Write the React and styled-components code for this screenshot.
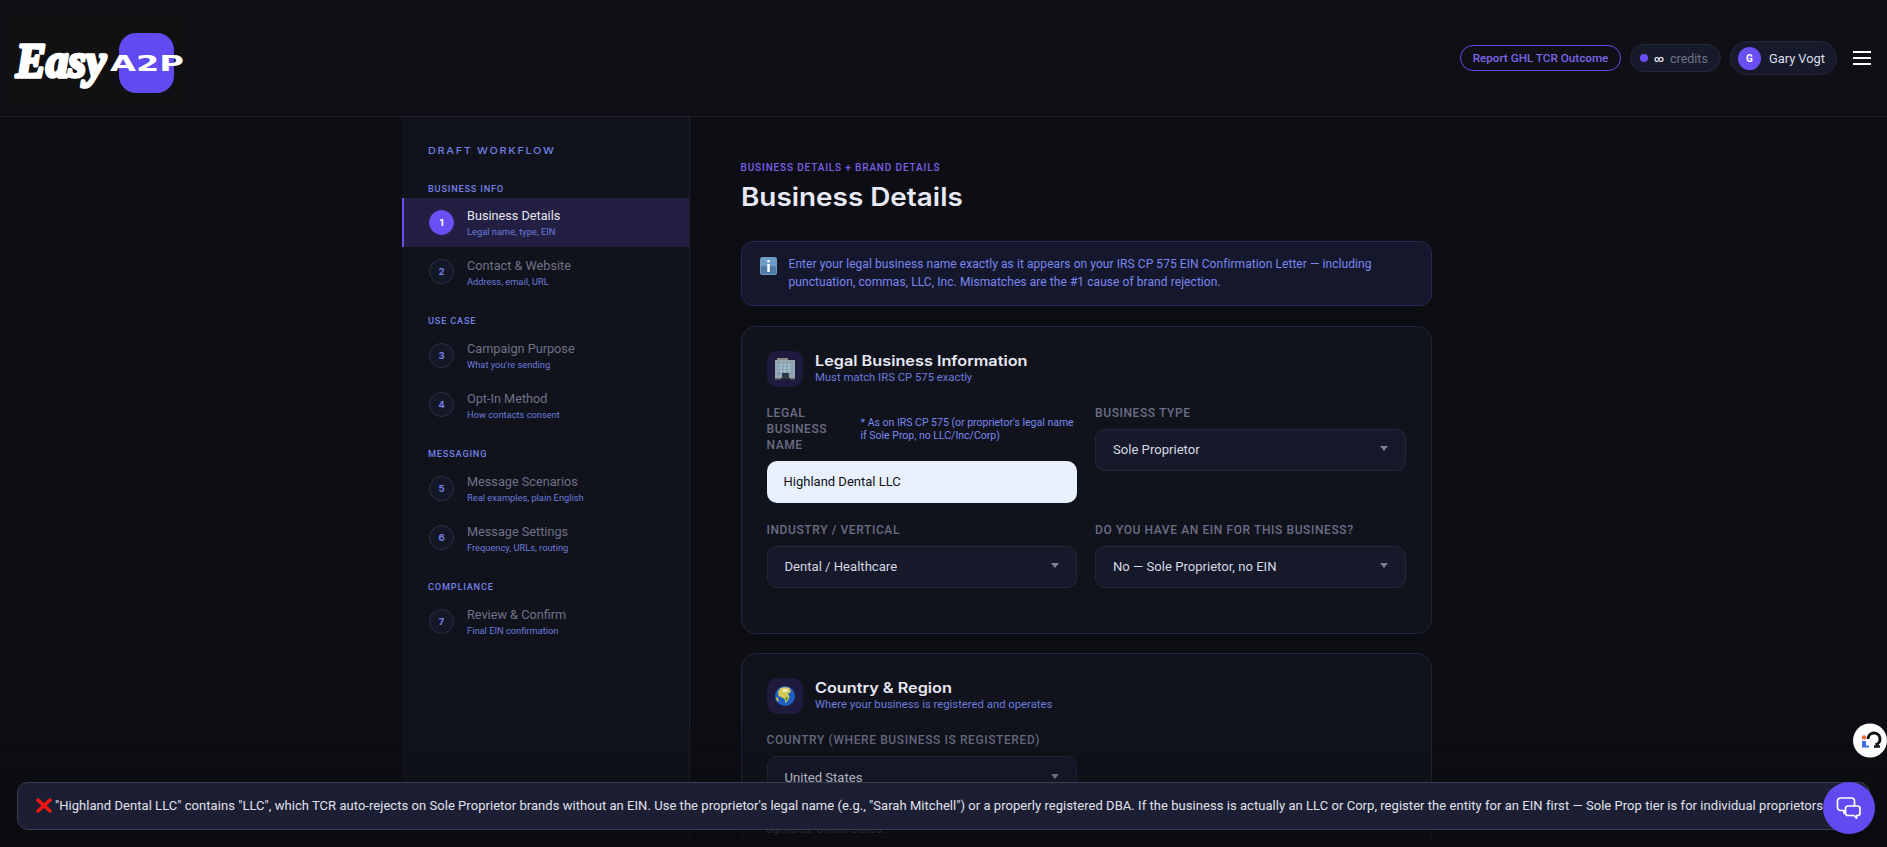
import styled, { createGlobalStyle } from "styled-components";

const GlobalStyle = createGlobalStyle`
  html, body {
    margin: 0;
    height: 100%;
    overflow: hidden;
    background: #0d0e13;
    font-family: "Roboto", "Liberation Sans", sans-serif;
  }
  * { box-sizing: border-box; }
`;

const Header = styled.header`
  height: 117px;
  padding: 15px 16px 0 5px;
  display: flex;
  justify-content: space-between;
  background: #0f0f15;
  border-bottom: 1px solid #1f2029;
`;

const LogoMark = styled.svg`
  display: block;
  width: 185px;
  height: 95px;
`;

const HeaderRight = styled.div`
  display: flex;
  align-items: center;
  height: 86px;
  gap: 9px;
`;

const ReportButton = styled.button`
  height: 26px;
  width: 161px;
  padding: 0;
  background: transparent;
  border: 1.5px solid #5f4bef;
  border-radius: 13px;
  color: #7a66ea;
  font: 500 11.7px "Roboto", sans-serif;
`;

const CreditsPill = styled.div`
  height: 28px;
  width: 91px;
  padding-left: 9px;
  display: flex;
  align-items: center;
  background: #171a2a;
  border: 1px solid #25283a;
  border-radius: 14px;
  color: #6f7189;
  font-size: 12.5px;
`;

const Dot = styled.span`
  width: 8px;
  height: 8px;
  border-radius: 50%;
  background: #6a4ff5;
  margin-right: 6px;
`;

const Infinity = styled.span`
  color: #e4e5ef;
  font-size: 9.5px;
  font-weight: 700;
  margin-right: 6px;
`;

const UserPill = styled.div`
  height: 34px;
  width: 107px;
  padding-left: 7px;
  display: flex;
  align-items: center;
  gap: 8px;
  background: #171a2a;
  border: 1px solid #25283a;
  border-radius: 17px;
  color: #dcdeea;
  font-size: 12.8px;
  white-space: nowrap;
`;

const Avatar = styled.span`
  width: 23px;
  height: 23px;
  border-radius: 50%;
  display: flex;
  align-items: center;
  justify-content: center;
  background: #6a4ff5;
  color: #fff;
  font-size: 10px;
  font-weight: 700;
`;

const Burger = styled.div`
  width: 18px;
  margin-left: 7px;
  display: flex;
  flex-direction: column;
  gap: 4px;
  span {
    height: 2px;
    background: #fff;
  }
`;

const Layout = styled.div`
  width: 1083px;
  margin: 0 auto;
  display: grid;
  grid-template-columns: 288px 1fr;
`;

const Sidebar = styled.aside`
  min-height: 730px;
  padding-top: 27px;
  background: #11131c;
  border-right: 1px solid #1f2130;
`;

const SideTitle = styled.div`
  padding-left: 26px;
  margin-bottom: 25.5px;
  color: #7380e6;
  font-family: "Inter", sans-serif;
  font-size: 9.5px;
  line-height: 13px;
  font-weight: 500;
  letter-spacing: 1.5px;
  transform: scaleX(1.14);
  transform-origin: 26px 0;
`;

const GroupLabel = styled.div`
  padding-left: 26px;
  margin: ${(p) => (p.$first ? "1px 0 3px" : "18px 0 4px")};
  color: #7380e6;
  font-size: 9.2px;
  line-height: 12px;
  font-weight: 500;
  letter-spacing: 0.8px;
`;

const StepRow = styled.div`
  height: 49.5px;
  padding-left: ${(p) => (p.$active ? "25px" : "27px")};
  display: flex;
  align-items: center;
  gap: 13px;
  background: ${(p) => (p.$active ? "#231f42" : "transparent")};
  border-left: ${(p) => (p.$active ? "2px solid #6a4ff5" : "none")};
`;

const StepNum = styled.span`
  width: 25px;
  height: 25px;
  flex: none;
  border-radius: 50%;
  display: flex;
  align-items: center;
  justify-content: center;
  background: ${(p) => (p.$active ? "#6a4ff5" : "#141726")};
  border: 1px solid ${(p) => (p.$active ? "#6a4ff5" : "#2c2f42")};
  color: ${(p) => (p.$active ? "#fff" : "#7380e6")};
  font-family: "Inter", sans-serif;
  font-size: 9.5px;
  font-weight: 700;
`;

const StepText = styled.div`
  padding-top: 2px;
`;

const StepTitle = styled.div`
  color: ${(p) => (p.$active ? "#e6e7f2" : "#6f7189")};
  font-size: 12.7px;
  line-height: 16px;
`;

const StepSub = styled.div`
  margin-top: 1px;
  color: #6c79dc;
  font-size: 9.3px;
  line-height: 13px;
`;

const Main = styled.main`
  padding: 43.5px 53.5px 0 50.5px;
`;

const Eyebrow = styled.div`
  color: #7b5ee8;
  font-size: 10px;
  line-height: 14px;
  font-weight: 500;
  letter-spacing: 0.85px;
`;

const PageTitle = styled.h1`
  margin: 6.5px 0 28px;
  color: #e8e9f5;
  font-family: "Inter", sans-serif;
  font-size: 25px;
  line-height: 32px;
  font-weight: 600;
  transform: scaleX(1.115);
  transform-origin: left;
`;

const InfoBox = styled.div`
  padding: 13px 20px 14px 18px;
  margin-bottom: 19.5px;
  display: flex;
  align-items: flex-start;
  gap: 12px;
  background: #15172c;
  border: 1px solid #262a52;
  border-radius: 12px;
  color: #7b87f0;
  font-size: 12px;
  line-height: 18px;
  letter-spacing: 0.07px;
  svg {
    flex: none;
    margin-top: 2px;
  }
`;

const Card = styled.section`
  padding: 24px 25px 45px;
  margin-bottom: 19.5px;
  background: #11131c;
  border: 1px solid #23263a;
  border-radius: 15px;
`;

const CardHead = styled.div`
  display: flex;
  gap: 12.5px;
  margin-bottom: 18px;
`;

const IconBox = styled.div`
  width: 36px;
  height: 36px;
  flex: none;
  border-radius: 10px;
  display: flex;
  align-items: center;
  justify-content: center;
  background: #1f1b3f;
`;

const CardTitle = styled.div`
  color: #e8e9f5;
  font-family: "Inter", sans-serif;
  font-size: 14.5px;
  line-height: 20px;
  font-weight: 600;
  transform: scaleX(1.12);
  transform-origin: left;
`;

const CardSub = styled.div`
  color: #6c79dc;
  font-size: 11.3px;
  line-height: 14px;
`;

const FieldGrid = styled.div`
  display: grid;
  grid-template-columns: 1fr 1fr;
  gap: 19px 18px;
  align-items: start;
`;

const LabelRow = styled.div`
  display: flex;
  align-items: center;
  gap: 8px;
  margin-bottom: 8px;
`;

const FieldLabel = styled.label`
  flex: ${(p) => (p.$narrow ? "0 0 86px" : "1")};
  color: #6a6d85;
  font-size: 12px;
  line-height: 16px;
  font-weight: 500;
  letter-spacing: 0.6px;
`;

const FieldNote = styled.span`
  flex: 1;
  color: #7b87f0;
  font-size: 10.5px;
  line-height: 13px;
`;

const TextInput = styled.input`
  display: block;
  width: 100%;
  height: 42px;
  padding: 0 17px;
  border: none;
  border-radius: 10px;
  background: #e8f0fe;
  color: #111;
  font: 400 13px "Roboto", sans-serif;
`;

const SelectBox = styled.div`
  height: 42px;
  padding: 0 17px;
  display: flex;
  align-items: center;
  justify-content: space-between;
  background: #161929;
  border: 1px solid #25283a;
  border-radius: 10px;
  color: #d6d8e6;
  font-size: 13.1px;
  &::after {
    content: "";
    border-left: 4.5px solid transparent;
    border-right: 4.5px solid transparent;
    border-top: 5px solid #7e8299;
    margin-bottom: 2px;
  }
`;

const Hint = styled.p`
  margin: 9px 0 0;
  color: #6a6d85;
  font-size: 11px;
  line-height: 15px;
`;

const BottomFade = styled.div`
  position: fixed;
  left: 0;
  right: 0;
  bottom: 0;
  height: 130px;
  background: linear-gradient(rgba(10, 10, 15, 0), rgba(10, 10, 15, 0.2) 50%, rgba(10, 10, 15, 0.85));
  pointer-events: none;
`;

const Toast = styled.div`
  position: fixed;
  left: 17px;
  right: 17px;
  bottom: 17.5px;
  height: 47.5px;
  padding-left: 18px;
  display: flex;
  align-items: center;
  gap: 3px;
  background: #1c1f33;
  border: 1px solid #3a3d52;
  border-radius: 11px;
  color: #e0e2ee;
  font-size: 13px;
  letter-spacing: 0.045px;
  white-space: nowrap;
  overflow: hidden;
  svg {
    flex: none;
  }
`;

const ChatButton = styled.button`
  position: fixed;
  right: 12px;
  bottom: 13px;
  width: 52px;
  height: 52px;
  padding: 0;
  border: none;
  border-radius: 50%;
  display: flex;
  align-items: center;
  justify-content: center;
  background: #5f4bef;
`;

const HelpWidget = styled.svg`
  position: fixed;
  right: 0;
  top: 723px;
  width: 34px;
  height: 35px;
`;

const nav = [
  {
    label: "BUSINESS INFO",
    steps: [
      { n: 1, title: "Business Details", sub: "Legal name, type, EIN", active: true },
      { n: 2, title: "Contact & Website", sub: "Address, email, URL" },
    ],
  },
  {
    label: "USE CASE",
    steps: [
      { n: 3, title: "Campaign Purpose", sub: "What you're sending" },
      { n: 4, title: "Opt-In Method", sub: "How contacts consent" },
    ],
  },
  {
    label: "MESSAGING",
    steps: [
      { n: 5, title: "Message Scenarios", sub: "Real examples, plain English" },
      { n: 6, title: "Message Settings", sub: "Frequency, URLs, routing" },
    ],
  },
  {
    label: "COMPLIANCE",
    steps: [{ n: 7, title: "Review & Confirm", sub: "Final EIN confirmation" }],
  },
];

function Logo() {
  return (
    <LogoMark viewBox="0 0 185 95">
      <rect width="185" height="95" fill="#111113" />
      <rect x="114" y="18" width="55" height="60" rx="17" fill="#5f4bef" />
      <text
        x="11"
        y="62"
        textLength="90"
        lengthAdjust="spacingAndGlyphs"
        fontFamily="Liberation Serif"
        fontStyle="italic"
        fontWeight="700"
        fontSize="48"
        fill="#fff"
        stroke="#fff"
        strokeWidth="3.5"
        strokeLinejoin="round"
      >
        Easy
      </text>
      <text
        x="105"
        y="56"
        textLength="74"
        lengthAdjust="spacingAndGlyphs"
        fontFamily="DejaVu Sans"
        fontWeight="700"
        fontSize="22"
        fill="#fff"
      >
        A2P
      </text>
    </LogoMark>
  );
}

function InfoIcon() {
  return (
    <svg width="17" height="18" viewBox="0 0 17 18">
      <rect width="17" height="18" rx="2.5" fill="#6f9cc4" />
      <rect x="1" y="9" width="15" height="8" rx="2" fill="#4f7ba3" />
      <rect x="7.3" y="3" width="2.4" height="2.4" fill="#fff" />
      <rect x="7.3" y="7" width="2.4" height="8" fill="#fff" />
    </svg>
  );
}

function BuildingIcon() {
  return (
    <svg width="20" height="22" viewBox="0 0 20 22">
      <rect x="2" y="0" width="11" height="2" fill="#8d8a8e" />
      <rect x="0" y="2" width="20" height="18" fill="#9aa6ae" />
      <rect x="2" y="4" width="16" height="13" fill="#7d9bb0" />
      <path d="M2 7h16M2 10h16M2 13h16M6 4v13M10 4v13M14 4v13" stroke="#c2d0d8" strokeWidth="0.7" />
      <rect x="7" y="15" width="7" height="6" fill="#2c3a45" />
      <rect x="0" y="20" width="6" height="1.5" fill="#6b6f73" />
      <rect x="15" y="20" width="5" height="1.5" fill="#6b6f73" />
    </svg>
  );
}

function GlobeIcon() {
  return (
    <svg width="20" height="20" viewBox="0 0 20 20">
      <circle cx="10" cy="10" r="10" fill="#1d5fc4" />
      <path d="M5 2.5 C8 0.5 13 1 15 2.5 L16 6 L13 7.5 L14.5 11 L12.5 15 L10.5 17 L9.5 13 L7 11.5 L3.5 10 L3 6 Z" fill="#d6c95a" />
      <path d="M8 3 L13 3 L12 6 L8 6 Z" fill="#f1ecc0" />
      <path d="M10.5 11 L13 11 L12 14.5 L10.5 15 Z" fill="#4d9a3a" />
      <path d="M0.5 12 L2.5 11 L4 15 L2.5 15.5 Z" fill="#c9b84a" />
    </svg>
  );
}

function CrossIcon() {
  return (
    <svg width="16" height="15" viewBox="0 0 16 15">
      <path d="M1 1 L15 14 M15 1 L1 14" stroke="#f01414" strokeWidth="3.4" strokeLinecap="butt" />
    </svg>
  );
}

function ChatIcon() {
  return (
    <svg width="26" height="26" viewBox="0 0 26 26" fill="none" stroke="#fff" strokeWidth="1.7" strokeLinejoin="round">
      <path d="M4.5 3h11a3 3 0 0 1 3 3v6.5a3 3 0 0 1-3 3h-5l-2.5 2.8v-2.8h-3.5a3 3 0 0 1-3-3V6a3 3 0 0 1 3-3z" />
      <path
        d="M12 11h9.5a2.5 2.5 0 0 1 2.5 2.5v4.5a2.5 2.5 0 0 1-2.5 2.5h-1v2.7l-2.6-2.7H12a2.5 2.5 0 0 1-2.5-2.5v-4.5A2.5 2.5 0 0 1 12 11z"
        fill="#5f4bef"
      />
    </svg>
  );
}

function Help() {
  return (
    <HelpWidget viewBox="0 0 34 35">
      <circle cx="17" cy="17.5" r="17" fill="#fff" />
      <path d="M15 16a6 6 0 1 1 7.5 5.8" fill="none" stroke="#111" strokeWidth="3" />
      <path d="M21 23.5h6" stroke="#111" strokeWidth="2.5" />
      <circle cx="11" cy="14.5" r="2.2" fill="#f26a3c" />
      <rect x="9" y="18" width="4" height="6.5" fill="#3f6fe8" />
      <rect x="13" y="22.5" width="3" height="2" fill="#3f6fe8" />
    </HelpWidget>
  );
}

export default function App() {
  return (
    <>
      <GlobalStyle />
      <Header>
        <Logo />
        <HeaderRight>
          <ReportButton>Report GHL TCR Outcome</ReportButton>
          <CreditsPill>
            <Dot />
            <Infinity>∞</Infinity>
            credits
          </CreditsPill>
          <UserPill>
            <Avatar>G</Avatar>
            Gary Vogt
          </UserPill>
          <Burger>
            <span />
            <span />
            <span />
          </Burger>
        </HeaderRight>
      </Header>
      <Layout>
        <Sidebar>
          <SideTitle>DRAFT WORKFLOW</SideTitle>
          {nav.map((group, i) => (
            <div key={group.label}>
              <GroupLabel $first={i === 0}>{group.label}</GroupLabel>
              {group.steps.map((step) => (
                <StepRow key={step.n} $active={step.active}>
                  <StepNum $active={step.active}>{step.n}</StepNum>
                  <StepText>
                    <StepTitle $active={step.active}>{step.title}</StepTitle>
                    <StepSub>{step.sub}</StepSub>
                  </StepText>
                </StepRow>
              ))}
            </div>
          ))}
        </Sidebar>
        <Main>
          <Eyebrow>BUSINESS DETAILS + BRAND DETAILS</Eyebrow>
          <PageTitle>Business Details</PageTitle>
          <InfoBox>
            <InfoIcon />
            <div>
              Enter your legal business name exactly as it appears on your IRS CP 575 EIN Confirmation Letter — including
              punctuation, commas, LLC, Inc. Mismatches are the #1 cause of brand rejection.
            </div>
          </InfoBox>
          <Card>
            <CardHead>
              <IconBox>
                <BuildingIcon />
              </IconBox>
              <div>
                <CardTitle>Legal Business Information</CardTitle>
                <CardSub>Must match IRS CP 575 exactly</CardSub>
              </div>
            </CardHead>
            <FieldGrid>
              <div>
                <LabelRow>
                  <FieldLabel $narrow>LEGAL BUSINESS NAME</FieldLabel>
                  <FieldNote>* As on IRS CP 575 (or proprietor's legal name if Sole Prop, no LLC/Inc/Corp)</FieldNote>
                </LabelRow>
                <TextInput defaultValue="Highland Dental LLC" />
              </div>
              <div>
                <LabelRow>
                  <FieldLabel>BUSINESS TYPE</FieldLabel>
                </LabelRow>
                <SelectBox>Sole Proprietor</SelectBox>
              </div>
              <div>
                <LabelRow>
                  <FieldLabel>INDUSTRY / VERTICAL</FieldLabel>
                </LabelRow>
                <SelectBox>Dental / Healthcare</SelectBox>
              </div>
              <div>
                <LabelRow>
                  <FieldLabel>DO YOU HAVE AN EIN FOR THIS BUSINESS?</FieldLabel>
                </LabelRow>
                <SelectBox>No — Sole Proprietor, no EIN</SelectBox>
              </div>
            </FieldGrid>
          </Card>
          <Card>
            <CardHead>
              <IconBox>
                <GlobeIcon />
              </IconBox>
              <div>
                <CardTitle>Country &amp; Region</CardTitle>
                <CardSub>Where your business is registered and operates</CardSub>
              </div>
            </CardHead>
            <FieldGrid>
              <div>
                <LabelRow>
                  <FieldLabel>COUNTRY (WHERE BUSINESS IS REGISTERED)</FieldLabel>
                </LabelRow>
                <SelectBox>United States</SelectBox>
                <Hint>
                  Where the business is legally registered with government
                  <br />
                  agencies. United States.
                </Hint>
              </div>
            </FieldGrid>
          </Card>
        </Main>
      </Layout>
      <BottomFade />
      <Toast>
        <CrossIcon />
        "Highland Dental LLC" contains "LLC", which TCR auto-rejects on Sole Proprietor brands without an EIN. Use the
        proprietor's legal name (e.g., "Sarah Mitchell") or a properly registered DBA. If the business is actually an LLC or
        Corp, register the entity for an EIN first — Sole Prop tier is for individual proprietors
      </Toast>
      <Help />
      <ChatButton>
        <ChatIcon />
      </ChatButton>
    </>
  );
}
